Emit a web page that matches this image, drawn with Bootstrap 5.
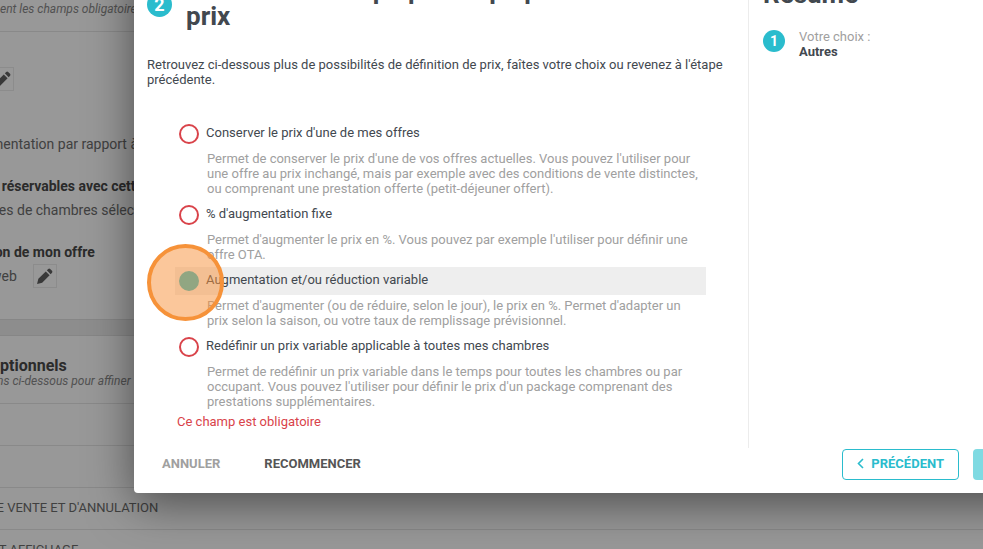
<!DOCTYPE html>
<html lang="fr">
<head>
<meta charset="utf-8">
<meta name="viewport" content="width=device-width, initial-scale=1">
<title>Définition du prix</title>
<link href="https://cdn.jsdelivr.net/npm/bootstrap@5.3.0/dist/css/bootstrap.min.css" rel="stylesheet">
<style>
:root{--teal:#2abccd;--ink:#42484f;--soft:#a0a0a0;--alert:#d9434a}
body{font-family:Roboto,"Liberation Sans",sans-serif;font-size:13px;line-height:15px;color:var(--ink);background:#f0f0f0}
.offer-page{margin-left:-9px;white-space:nowrap;color:#6c6c6c;font-size:14px;line-height:16px}
.sheet{background:#fdfdfd}
.sheet-head{height:32px;border-bottom:1px solid #e4e4e4}
.sheet-body{height:287px;padding-top:35px}
.hint{font-size:12px;font-style:italic;color:#888;line-height:14px}
.sheet-head.hint{padding:2px 0 0 9px}
.sheet strong{color:#484848}
.edit-btn{width:24px;height:24px;padding:2px;border:1px solid #e9e9e9;background:none;display:flex;align-items:center;justify-content:center}
.edit-lone{margin:0 0 45px -1px}
.field-title{padding-top:2px}
.sheet-gap{height:17px;background:#ebebeb;border-top:1px solid #e0e0e0;border-bottom:1px solid #e0e0e0}
.option-head{height:68px;padding-top:22px;border-bottom:1px solid #e4e4e4}
.option-head strong{font-size:16px}
.option-head .hint{padding-left:6px}
.option-line{height:42px;margin-left:-3px;padding-bottom:2px;border-bottom:1px solid #e4e4e4;display:flex;align-items:center;font-size:13px}
.veil{background:rgba(0,0,0,.4);padding-left:134px;z-index:10}
.dialog{margin:-43px -122px 0 0;padding-top:20px;background:#fff;border-radius:4px;box-shadow:0 10px 46px rgba(0,0,0,.5)}
.steps{width:615px;height:471px;padding-left:13px;border-right:1px solid #ececec}
.dialog h2{font-size:26px;line-height:26px;font-weight:700;margin:0}
.title-row{gap:14px}
.num{flex:none;border-radius:50%;background:var(--teal);color:#fff;font-weight:700;display:flex;align-items:center;justify-content:center}
.num-lg{width:25px;height:25px;font-size:18px;margin-top:15px}
.num-sm{width:22px;height:22px;font-size:14px;margin:1px 14px 0 0}
.intro{margin:28px 20px 33px 0}
.choices{margin:0 42px 0 28px}
.choice{height:28px;padding-left:4px;gap:7px}
.choice.active{background:#eee}
.choice label{padding-bottom:4px}
.ring{appearance:none;width:20px;height:20px;margin:0;border:2px solid var(--alert);border-radius:50%;background:#fff}
.ring:checked{border-color:var(--teal);background:var(--teal)}
.about{margin:3px 0 5px;padding:0 8px 0 32px;color:var(--soft)}
.spot{position:absolute;width:77px;height:77px;left:-28px;top:-23px;border:4px solid #f69239;border-radius:50%;background:rgba(247,143,56,.5);pointer-events:none}
.error{color:var(--alert);padding-left:2px}
.summary{padding:4px 14px}
.picked{margin-top:22px}
.picked-label{color:var(--soft)}
.foot{height:45px;padding:1px 15px 13px 28px}
.foot .btn{font-size:13px;line-height:15px;font-weight:700;text-transform:uppercase;padding:7px 14px;border-radius:4px}
.foot .flat{padding:7px 0;color:#555}
.foot .cancel{color:var(--soft);margin-right:44px}
.foot .prev{color:var(--teal);border-color:var(--teal);gap:7px;margin-right:14px;padding:6px 14px 8px}
.foot .next{width:117px;background:#7fdae2}
</style>
<script src="https://cdn.jsdelivr.net/npm/bootstrap@5.3.0/dist/js/bootstrap.bundle.min.js"></script>
</head>
<body class="vh-100 overflow-hidden position-relative">
<svg class="d-none"><symbol id="pen" viewBox="0 0 16 16"><path fill="#606060" d="M1 15l1.200-4.800L9.200 3.200l3.600 3.600L5.800 13.800zM10.200 2.200l1.300-1.300q.9-.7 1.800 0l1.800 1.800q.7.900 0 1.800l-1.300 1.300z"/></symbol></svg>
<main class="offer-page">
  <section class="sheet">
    <div class="sheet-head hint">ent les champs obligatoires</div>
    <div class="sheet-body">
      <button class="edit-btn edit-lone" type="button" aria-label="Modifier le prix"><svg width="17" height="17"><use href="#pen"/></svg></button>
      <div class="mb-4">mentation par rapport à</div>
      <div class="field-title"><strong>s réservables avec cette</strong></div>
      <div class="mt-2 mb-4">pes de chambres sélectionnés</div>
      <div class="field-title"><strong>ion de mon offre</strong></div>
      <div class="d-flex align-items-center gap-3 mt-1"><span>web</span><button class="edit-btn" type="button" aria-label="Modifier la diffusion"><svg width="17" height="17"><use href="#pen"/></svg></button></div>
    </div>
  </section>
  <div class="sheet-gap"></div>
  <section class="sheet">
    <div class="option-head"><strong>optionnels</strong><div class="hint">ns ci-dessous pour affiner</div></div>
    <div class="option-line"></div>
    <div class="option-line"></div>
    <div class="option-line">DE VENTE ET D'ANNULATION</div>
    <div class="option-line">&nbsp;ET AFFICHAGE</div>
  </section>
</main>
<div class="veil position-absolute top-0 start-0 w-100 h-100 overflow-hidden">
  <div class="dialog" role="dialog" aria-label="Définir votre prix">
    <div class="d-flex">
      <section class="steps">
        <div class="title-row d-flex"><span class="num num-lg">2</span><h2>Constitution étape par étape pour définir votre prix</h2></div>
        <p class="intro">Retrouvez ci-dessous plus de possibilités de définition de prix, faîtes votre choix ou revenez à l'étape précédente.</p>
        <div class="choices">
          <div class="choice d-flex align-items-center"><input class="ring" type="radio" name="prix" id="p1"><label for="p1">Conserver le prix d'une de mes offres</label></div>
          <p class="about">Permet de conserver le prix d'une de vos offres actuelles. Vous pouvez l'utiliser pour une offre au prix inchangé, mais par exemple avec des conditions de vente distinctes, ou comprenant une prestation offerte (petit-déjeuner offert).</p>
          <div class="choice d-flex align-items-center"><input class="ring" type="radio" name="prix" id="p2"><label for="p2">% d'augmentation fixe</label></div>
          <p class="about">Permet d'augmenter le prix en %. Vous pouvez par exemple l'utiliser pour définir une offre OTA.</p>
          <div class="choice active d-flex align-items-center position-relative"><input class="ring" type="radio" name="prix" id="p3" checked><label for="p3">Augmentation et/ou réduction variable</label><span class="spot"></span></div>
          <p class="about">Permet d'augmenter (ou de réduire, selon le jour), le prix en %. Permet d'adapter un prix selon la saison, ou votre taux de remplissage prévisionnel.</p>
          <div class="choice d-flex align-items-center"><input class="ring" type="radio" name="prix" id="p4"><label for="p4">Redéfinir un prix variable applicable à toutes mes chambres</label></div>
          <p class="about">Permet de redéfinir un prix variable dans le temps pour toutes les chambres ou par occupant. Vous pouvez l'utiliser pour définir le prix d'un package comprenant des prestations supplémentaires.</p>
          <div class="error">Ce champ est obligatoire</div>
        </div>
      </section>
      <aside class="summary">
        <h2>Résumé</h2>
        <div class="picked d-flex align-items-start"><span class="num num-sm">1</span><div><div class="picked-label">Votre choix :</div><strong>Autres</strong></div></div>
      </aside>
    </div>
    <footer class="foot d-flex align-items-start">
      <button type="button" class="btn flat cancel border-0">Annuler</button>
      <button type="button" class="btn flat border-0 me-auto">Recommencer</button>
      <button type="button" class="btn prev d-flex align-items-center"><svg width="7" height="11" viewBox="0 0 7 11" fill="none" stroke="currentColor" stroke-width="1.600"><path d="M6 1L1.500 5.500 6 10"/></svg>Précédent</button>
      <button type="button" class="btn next align-self-stretch" aria-label="Suivant"></button>
    </footer>
  </div>
</div>
</body>
</html>
